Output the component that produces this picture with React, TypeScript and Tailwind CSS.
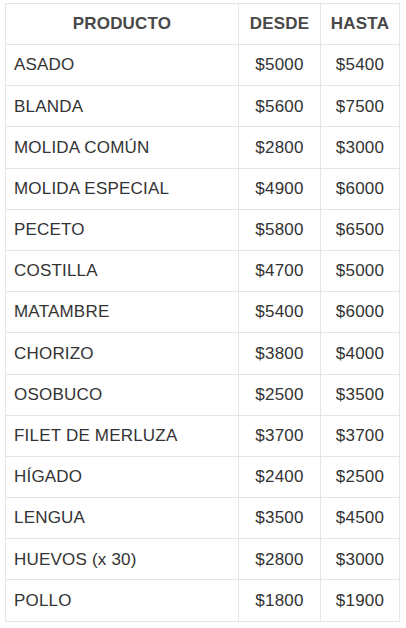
import React from 'react';

const rows: [string, string, string][] = [
  ['ASADO', '$5000', '$5400'],
  ['BLANDA', '$5600', '$7500'],
  ['MOLIDA COMÚN', '$2800', '$3000'],
  ['MOLIDA ESPECIAL', '$4900', '$6000'],
  ['PECETO', '$5800', '$6500'],
  ['COSTILLA', '$4700', '$5000'],
  ['MATAMBRE', '$5400', '$6000'],
  ['CHORIZO', '$3800', '$4000'],
  ['OSOBUCO', '$2500', '$3500'],
  ['FILET DE MERLUZA', '$3700', '$3700'],
  ['HÍGADO', '$2400', '$2500'],
  ['LENGUA', '$3500', '$4500'],
  ['HUEVOS (x 30)', '$2800', '$3000'],
  ['POLLO', '$1800', '$1900'],
];

const App: React.FC = () => {
  return (
    <div className="bg-white w-[406px] h-[628px] pt-[3px] pl-[5px] font-['Liberation_Sans',Arial,sans-serif]">
      <table className="table-fixed border-collapse w-[394px] text-[17px] tracking-[0.2px] text-[#333]">
        <colgroup>
          <col className="w-[233px]" />
          <col className="w-[82px]" />
          <col className="w-[79px]" />
        </colgroup>
        <thead>
          <tr className="h-[41px]">
            <th className="border border-[#e5e5e5] font-bold text-[#484848] text-center">PRODUCTO</th>
            <th className="border border-[#e5e5e5] font-bold text-[#484848] text-center">DESDE</th>
            <th className="border border-[#e5e5e5] font-bold text-[#484848] text-center">HASTA</th>
          </tr>
        </thead>
        <tbody>
          {rows.map(([name, from, to]) => (
            <tr key={name} className="h-[41.2px]">
              <td className="border border-[#e5e5e5] pl-[8px] text-left">{name}</td>
              <td className="border border-[#e5e5e5] text-center">{from}</td>
              <td className="border border-[#e5e5e5] text-center">{to}</td>
            </tr>
          ))}
        </tbody>
      </table>
    </div>
  );
};

export default App;
